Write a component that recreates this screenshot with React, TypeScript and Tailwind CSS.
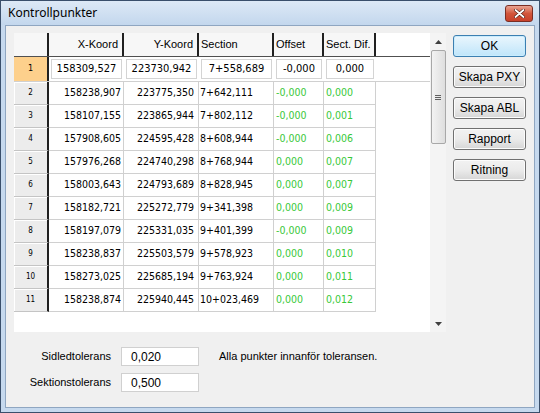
import * as React from "react";

const ROWS = [
  ["158309,527", "223730,942", "7+558,689", "-0,000", "0,000"],
  ["158238,907", "223775,350", "7+642,111", "-0,000", "0,000"],
  ["158107,155", "223865,944", "7+802,112", "-0,000", "0,001"],
  ["157908,605", "224595,428", "8+608,944", "-0,000", "0,006"],
  ["157976,268", "224740,298", "8+768,944", "0,000", "0,007"],
  ["158003,643", "224793,689", "8+828,945", "0,000", "0,007"],
  ["158182,721", "225272,779", "9+341,398", "0,000", "0,009"],
  ["158197,079", "225331,035", "9+401,399", "-0,000", "0,009"],
  ["158238,837", "225503,579", "9+578,923", "0,000", "0,010"],
  ["158273,025", "225685,194", "9+763,924", "0,000", "0,011"],
  ["158238,874", "225940,445", "10+023,469", "0,000", "0,012"],
];

const BUTTONS = ["Skapa PXY", "Skapa ABL", "Rapport", "Ritning"];

function HeaderCell({ w, label, right }: { w: string; label: string; right?: boolean }) {
  return (
    <div
      className={`${w} flex h-full items-center whitespace-nowrap border-r-2 border-[#202020] bg-[#f7f7f7] text-[11px] ${
        right ? "justify-end pr-[4px]" : "justify-start pl-[2px]"
      }`}
    >
      {label}
    </div>
  );
}

function WinButton({ label, primary }: { label: string; primary?: boolean }) {
  return (
    <button
      className={
        primary
          ? "flex h-[22px] w-[73px] items-center justify-center rounded-[3px] border border-[#3c7fb1] bg-gradient-to-b from-[#eaf6fd] to-[#bfe5fa] text-[12px] text-black shadow-[inset_0_0_0_1px_#c9ecfd]"
          : "flex h-[22px] w-[73px] items-center justify-center rounded-[3px] border border-[#707070] bg-gradient-to-b from-[#f2f2f2] via-[#ebebeb] to-[#d6d6d6] text-[12px] text-black shadow-[inset_0_0_0_1px_#fcfcfc]"
      }
    >
      {label}
    </button>
  );
}

export default function App() {
  return (
    <div
      className="flex h-[413px] w-[540px] flex-col border border-[#3a4f6b] bg-[#c6d9ee] text-[11px] text-black"
      style={{ fontFamily: '"Liberation Sans", Arial, sans-serif' }}
    >
      {/* title bar */}
      <div className="flex h-[24px] items-center justify-between bg-gradient-to-b from-[#dde9f6] to-[#c3d7ed] pl-[7px] pr-[6px]">
        <span className="text-[12px] text-black" style={{ fontFamily: '"Noto Sans", "Liberation Sans", sans-serif' }}>
          Kontrollpunkter
        </span>
        <div className="mb-[3px] flex h-[17px] w-[28px] items-center justify-center self-end rounded-[3px] border border-[#7a2e24] bg-gradient-to-b from-[#e8a493] via-[#d2553b] to-[#c8402a]">
          <svg width="11" height="9" viewBox="0 0 11 9">
            <path d="M1.5 1 L9.5 8 M9.5 1 L1.5 8" stroke="#4a1a12" strokeWidth="3" strokeLinecap="round" />
            <path d="M1.5 1 L9.5 8 M9.5 1 L1.5 8" stroke="#ffffff" strokeWidth="1.8" strokeLinecap="round" />
          </svg>
        </div>
      </div>

      {/* client area */}
      <div className="mx-[4px] mb-[4px] flex flex-1 flex-col border border-[#8fa6c1] bg-[#f0f0f0] pl-[8px] pt-[7px]">
        <div className="flex">
          {/* grid */}
          <div className="flex h-[299px] w-[432px] bg-white">
            <div className="flex w-[416px] flex-col">
              <div className="flex h-[24px] border-b border-[#505050]">
                <div className="h-full w-[35px] border-r-2 border-[#202020] bg-[#f7f7f7]" />
                <HeaderCell w="w-[75px]" label="X-Koord" right />
                <HeaderCell w="w-[75px]" label="Y-Koord" right />
                <HeaderCell w="w-[75px]" label="Section" />
                <HeaderCell w="w-[50px]" label="Offset" />
                <HeaderCell w="w-[52px]" label="Sect. Dif." />
              </div>
              {ROWS.map((r, i) =>
                i === 0 ? (
                  <div
                    key={i}
                    className="flex h-[25px] border-b border-[#d0d0d0] text-[11px]"
                    style={{ fontFamily: '"DejaVu Sans Condensed", "Liberation Sans", sans-serif' }}
                  >
                    <div className="flex h-full w-[35px] items-center justify-center border-r-2 border-[#202020] bg-[#fdd08c] text-[9px]">
                      1
                    </div>
                    {[
                      ["w-[75px]", r[0]],
                      ["w-[75px]", r[1]],
                      ["w-[75px]", r[2]],
                      ["w-[50px]", r[3]],
                      ["w-[52px]", r[4]],
                    ].map(([w, v], j) => (
                      <div key={j} className={`${w} flex h-full items-center px-[2px]`}>
                        <div className="flex h-[20px] w-full items-center justify-center border border-[#d4d4d4] bg-white">
                          {v}
                        </div>
                      </div>
                    ))}
                  </div>
                ) : (
                  <div
                    key={i}
                    className="flex h-[23px] text-[10.5px]"
                    style={{ fontFamily: '"DejaVu Sans Condensed", "Liberation Sans", sans-serif' }}
                  >
                    <div className="flex h-full w-[35px] items-center justify-center border-r-2 border-b border-r-[#202020] border-b-[#c4c4c4] bg-[#ececec] text-[8px] shadow-[inset_1px_1px_0_#ffffff]">
                      {i + 1}
                    </div>
                    <div className="flex h-full w-[75px] items-center justify-end border-r border-b border-[#d0d0d0] pr-[2px]">
                      {r[0]}
                    </div>
                    <div className="flex h-full w-[75px] items-center justify-end border-r border-b border-[#d0d0d0] pr-[4px]">
                      {r[1]}
                    </div>
                    <div className="flex h-full w-[75px] items-center border-r border-b border-[#d0d0d0] pl-[1px]">
                      {r[2]}
                    </div>
                    <div className="flex h-full w-[50px] items-center border-r border-b border-[#d0d0d0] pl-[2px] text-[#38c838]">
                      {r[3]}
                    </div>
                    <div className="flex h-full w-[52px] items-center border-r border-b border-[#d0d0d0] pl-[2px] text-[#38c838]">
                      {r[4]}
                    </div>
                  </div>
                )
              )}
            </div>
            {/* scrollbar */}
            <div className="flex w-[16px] flex-col items-center bg-[#f4f4f4]">
              <div className="flex h-[17px] items-center justify-center">
                <svg width="7" height="4" viewBox="0 0 7 4">
                  <path d="M0 4 L3.5 0 L7 4 Z" fill="#404040" />
                </svg>
              </div>
              <div className="flex h-[94px] w-[15px] items-center justify-center rounded-[2px] border border-[#a8a8a8] bg-gradient-to-r from-[#f3f3f3] to-[#dedede]">
                <div className="flex flex-col gap-[1px]">
                  <div className="h-px w-[6px] bg-[#606060]" />
                  <div className="h-px w-[6px] bg-[#606060]" />
                  <div className="h-px w-[6px] bg-[#606060]" />
                </div>
              </div>
              <div className="flex-1" />
              <div className="flex h-[17px] items-center justify-center">
                <svg width="7" height="4" viewBox="0 0 7 4">
                  <path d="M0 0 L7 0 L3.5 4 Z" fill="#404040" />
                </svg>
              </div>
            </div>
          </div>

          {/* buttons */}
          <div className="ml-[7px] flex flex-col gap-[9px] pt-[2px]">
            <WinButton label="OK" primary />
            {BUTTONS.map((b) => (
              <WinButton key={b} label={b} />
            ))}
          </div>
        </div>

        {/* tolerances */}
        <div className="mt-[15px] flex">
          <div className="flex flex-col gap-[7px]">
            <div className="flex items-center">
              <span className="w-[97px] text-right">Sidledtolerans</span>
              <div className="ml-[10px] flex h-[19px] w-[78px] items-center border border-[#d0d0d0] bg-white pl-[9px] text-[12px]">0,020</div>
            </div>
            <div className="flex items-center">
              <span className="w-[97px] text-right">Sektionstolerans</span>
              <div className="ml-[10px] flex h-[19px] w-[78px] items-center border border-[#d0d0d0] bg-white pl-[9px] text-[12px]">0,500</div>
            </div>
          </div>
          <div className="ml-[20px] flex h-[19px] items-center">Alla punkter innanför toleransen.</div>
        </div>
      </div>
    </div>
  );
}
